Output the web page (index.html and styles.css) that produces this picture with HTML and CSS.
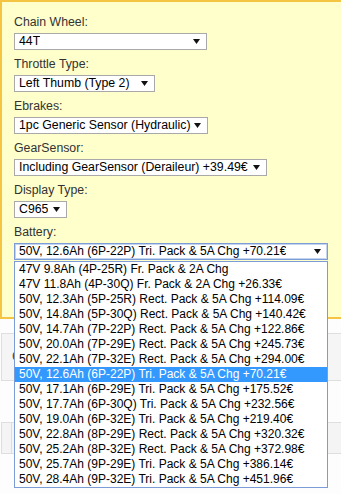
FILE: index.html
```
<!DOCTYPE html>
<html lang="en">
<head>
    <meta charset="UTF-8">
    <meta name="viewport" content="width=device-width, initial-scale=1.0">
    <title>Options</title>
    <link rel="stylesheet" href="styles.css">
</head>
<body>
    <div class="optPanel">
        <div class="field">
            <div class="fieldLabel">Chain Wheel:</div>
            <div class="select wChain"><span>44T</span><svg class="arrow" width="7" height="5" viewBox="0 0 7 5"><polygon points="0,0 7,0 3.5,5"/></svg></div>
        </div>
        <div class="field">
            <div class="fieldLabel">Throttle Type:</div>
            <div class="select wThrottle"><span>Left Thumb (Type 2)</span><svg class="arrow" width="7" height="5" viewBox="0 0 7 5"><polygon points="0,0 7,0 3.5,5"/></svg></div>
        </div>
        <div class="field">
            <div class="fieldLabel">Ebrakes:</div>
            <div class="select wBrakes"><span>1pc Generic Sensor (Hydraulic)</span><svg class="arrow" width="7" height="5" viewBox="0 0 7 5"><polygon points="0,0 7,0 3.5,5"/></svg></div>
        </div>
        <div class="field">
            <div class="fieldLabel">GearSensor:</div>
            <div class="select wGear"><span>Including GearSensor (Deraileur) +39.49€</span><svg class="arrow" width="7" height="5" viewBox="0 0 7 5"><polygon points="0,0 7,0 3.5,5"/></svg></div>
        </div>
        <div class="field">
            <div class="fieldLabel">Display Type:</div>
            <div class="select wDisplay"><span>C965</span><svg class="arrow" width="7" height="5" viewBox="0 0 7 5"><polygon points="0,0 7,0 3.5,5"/></svg></div>
        </div>
        <div class="field battery">
            <div class="fieldLabel">Battery:</div>
            <div class="select wBattery focused"><span>50V, 12.6Ah (6P-22P) Tri. Pack &amp; 5A Chg +70.21€</span><svg class="arrow" width="7" height="5" viewBox="0 0 7 5"><polygon points="0,0 7,0 3.5,5"/></svg></div>

            <!-- open list of the battery select -->
            <ul class="dropList">
                <li>47V 9.8Ah (4P-25R) Fr. Pack &amp; 2A Chg</li>
                <li>47V 11.8Ah (4P-30Q) Fr. Pack &amp; 2A Chg +26.33€</li>
                <li>50V, 12.3Ah (5P-25R) Rect. Pack &amp; 5A Chg +114.09€</li>
                <li>50V, 14.8Ah (5P-30Q) Rect. Pack &amp; 5A Chg +140.42€</li>
                <li>50V, 14.7Ah (7P-22P) Rect. Pack &amp; 5A Chg +122.86€</li>
                <li>50V, 20.0Ah (7P-29E) Rect. Pack &amp; 5A Chg +245.73€</li>
                <li>50V, 22.1Ah (7P-32E) Rect. Pack &amp; 5A Chg +294.00€</li>
                <li class="selected">50V, 12.6Ah (6P-22P) Tri. Pack &amp; 5A Chg +70.21€</li>
                <li>50V, 17.1Ah (6P-29E) Tri. Pack &amp; 5A Chg +175.52€</li>
                <li>50V, 17.7Ah (6P-30Q) Tri. Pack &amp; 5A Chg +232.56€</li>
                <li>50V, 19.0Ah (6P-32E) Tri. Pack &amp; 5A Chg +219.40€</li>
                <li>50V, 22.8Ah (8P-29E) Rect. Pack &amp; 5A Chg +320.32€</li>
                <li>50V, 25.2Ah (8P-32E) Rect. Pack &amp; 5A Chg +372.98€</li>
                <li>50V, 25.7Ah (9P-29E) Tri. Pack &amp; 5A Chg +386.14€</li>
                <li>50V, 28.4Ah (9P-32E) Tri. Pack &amp; 5A Chg +451.96€</li>
            </ul>
        </div>
    </div>

    <div class="lower">
        <div class="lowerCard">C</div>
        <div class="lowerBar"><div class="lowerCell"></div></div>
        <div class="lowerRest"></div>
    </div>
</body>
</html>
```

FILE: styles.css
```
body{margin: 0; background: #fdfdfd; font-family: "Liberation Sans", Arial, sans-serif; font-size: 12px;}

.optPanel{background: #ffffcc; border: 2px solid #f6c443; border-right: none; padding: 11px 0 57px 12px;}
.field{margin-top: 5px;}
.field:first-child{margin-top: 0;}
.battery{position: relative;}
.fieldLabel{height: 18px; line-height: 18px; font-size: 12.3px; color: #333; margin-bottom: 2px;}

.select{display: flex; align-items: center; justify-content: space-between; box-sizing: border-box; height: 17px; line-height: 15px; font-size: 12.3px; padding: 0 6px 0 4px; border: 1px solid #a9a9a9; background: #fff; color: #000; white-space: nowrap;}
.select span{overflow: hidden;}
.arrow{flex: none; fill: #111; margin-left: 2px;}
.focused{font-size: 12px; border-color: #7b9cd6; box-shadow: inset 0 0 0 1px #c3d4ef;}

.wChain{width: 193px;}
.wThrottle{width: 141px;}
.wBrakes{width: 194px;}
.wGear{width: 253px;}
.wDisplay{width: 53px;}
.wBattery{width: 314px;}

.dropList{position: absolute; left: 0; top: 38px; width: 314px; box-sizing: border-box; margin: 0; padding: 0; list-style: none; background: #fff; border: 1px solid #7b9cd6; z-index: 5;}
.dropList li{height: 15px; line-height: 15px; padding-left: 4px; color: #000; white-space: nowrap;}
.dropList .selected{background: #3399ff; color: #fff;}

.lower{padding: 14px 0 0 1px;}
.lowerCard{height: 48px; border: 1px solid #dedede; border-right: none; background: #f5f5f5; padding-left: 10px; padding-top: 14px; box-sizing: border-box; font-size: 14px; color: #444;}
.lowerBar{height: 30px; margin-top: 41px; border: 1px solid #dedede; border-right: none; background: #f4f4f4;}
.lowerCell{width: 9px; height: 100%; border-right: 1px solid #dedede;}
.lowerRest{height: 41px;}
```
